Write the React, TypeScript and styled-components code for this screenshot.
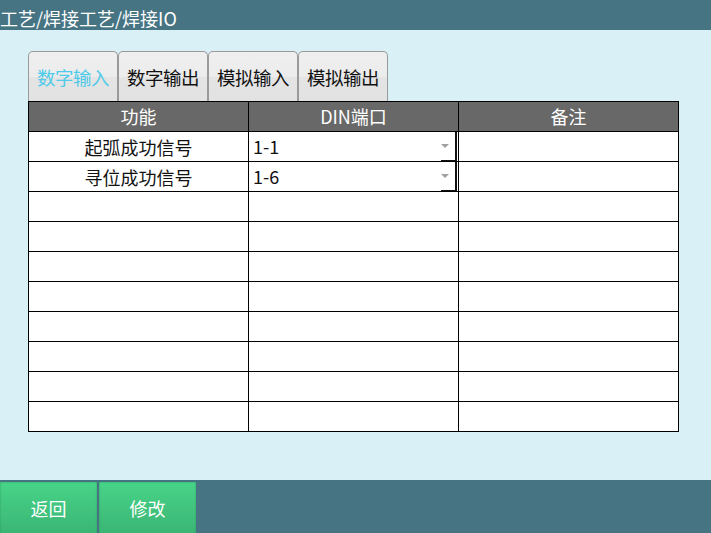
import styled, { createGlobalStyle } from "styled-components";

const GlobalStyle = createGlobalStyle`
  html, body {
    margin: 0;
    padding: 0;
    background: #d9f0f7;
    font-family: "Noto Sans CJK SC", "Noto Sans", sans-serif;
  }
`;

const tabs = ["数字输入", "数字输出", "模拟输入", "模拟输出"];

const rows = [
  { name: "起弧成功信号", port: "1-1", note: "" },
  { name: "寻位成功信号", port: "1-6", note: "" },
  ...Array.from({ length: 8 }, () => ({ name: "", port: "", note: "" })),
];

const App = () => {
  return (
    <Page>
      <GlobalStyle />
      <TitleBar>工艺/焊接工艺/焊接IO</TitleBar>
      <Content>
        <TabBar>
          {tabs.map((t, i) => (
            <Tab key={t} $active={i === 0}>
              {t}
            </Tab>
          ))}
        </TabBar>
        <Table>
          <thead>
            <tr>
              <HeadCell $w={219}>功能</HeadCell>
              <HeadCell $w={209}>DIN端口</HeadCell>
              <HeadCell $w={219}>备注</HeadCell>
            </tr>
          </thead>
          <tbody>
            {rows.map((r, i) => (
              <tr key={i}>
                <Cell>{r.name}</Cell>
                <ComboCell>
                  {r.port && (
                    <Combo>
                      <span>{r.port}</span>
                      <Arrow />
                    </Combo>
                  )}
                </ComboCell>
                <Cell>{r.note}</Cell>
              </tr>
            ))}
          </tbody>
        </Table>
      </Content>
      <BottomBar>
        <GreenButton>返回</GreenButton>
        <GreenButton>修改</GreenButton>
      </BottomBar>
    </Page>
  );
};

export default App;

const Page = styled.div`
  width: 711px;
  height: 533px;
  display: flex;
  flex-direction: column;
  background: #d9f0f7;
  overflow: hidden;
`;

const TitleBar = styled.div`
  height: 30px;
  background: #467483;
  color: #ffffff;
  font-size: 18px;
  line-height: 36px;
  white-space: nowrap;
`;

const Content = styled.div`
  flex: 1;
  padding: 21px 0 0 28px;
`;

const TabBar = styled.div`
  display: flex;
  height: 50px;
`;

const Tab = styled.div<{ $active?: boolean }>`
  box-sizing: border-box;
  width: 90px;
  height: 50px;
  border: 1px solid #9a9a9a;
  border-bottom: none;
  border-radius: 5px 5px 0 0;
  background: linear-gradient(#efefef 0%, #ececec 50%, #e4e4e4 51%, #e2e2e2 100%);
  color: ${({ $active }) => ($active ? "#4fcbe9" : "#111111")};
  font-size: 18.5px;
  line-height: 50px;
  text-align: center;
  white-space: nowrap;
  letter-spacing: -0.5px;
`;

const Table = styled.table`
  border-collapse: collapse;
  width: 647px;
  table-layout: fixed;
  background: #ffffff;
  font-size: 18px;
  color: #111111;
`;

const HeadCell = styled.th<{ $w: number }>`
  width: ${({ $w }) => $w}px;
  height: 29px;
  padding: 0;
  background: #686868;
  color: #ffffff;
  font-weight: normal;
  border: 1px solid #000000;
  text-align: center;
  line-height: 27px;
`;

const Cell = styled.td`
  height: 29px;
  padding: 0;
  border: 1px solid #000000;
  text-align: center;
  line-height: 26px;
`;

const ComboCell = styled(Cell)`
  text-align: left;
`;

const Combo = styled.div`
  position: relative;
  height: 29px;
  display: flex;
  align-items: center;
  padding-left: 4px;
  padding-bottom: 2px;
  box-sizing: border-box;
  border-right: 2px solid #111111;
  margin-right: 1px;

  &::after {
    content: "";
    position: absolute;
    right: 0;
    bottom: 0;
    width: 14px;
    height: 1px;
    background: #111111;
  }
`;

const Arrow = styled.span`
  position: absolute;
  right: 6px;
  top: 12px;
  width: 0;
  height: 0;
  border-left: 4px solid transparent;
  border-right: 4px solid transparent;
  border-top: 4px solid #a0a0a0;
`;

const BottomBar = styled.div`
  height: 53px;
  background: #467483;
  display: flex;
  gap: 2px;
`;

const GreenButton = styled.div`
  box-sizing: border-box;
  width: 97px;
  height: 53px;
  margin-top: 2px;
  background: linear-gradient(#47d488, #3bb474);
  box-shadow: inset 0 0 2px #2e9a5e;
  color: #ffffff;
  font-size: 18px;
  line-height: 52px;
  text-align: center;
`;
